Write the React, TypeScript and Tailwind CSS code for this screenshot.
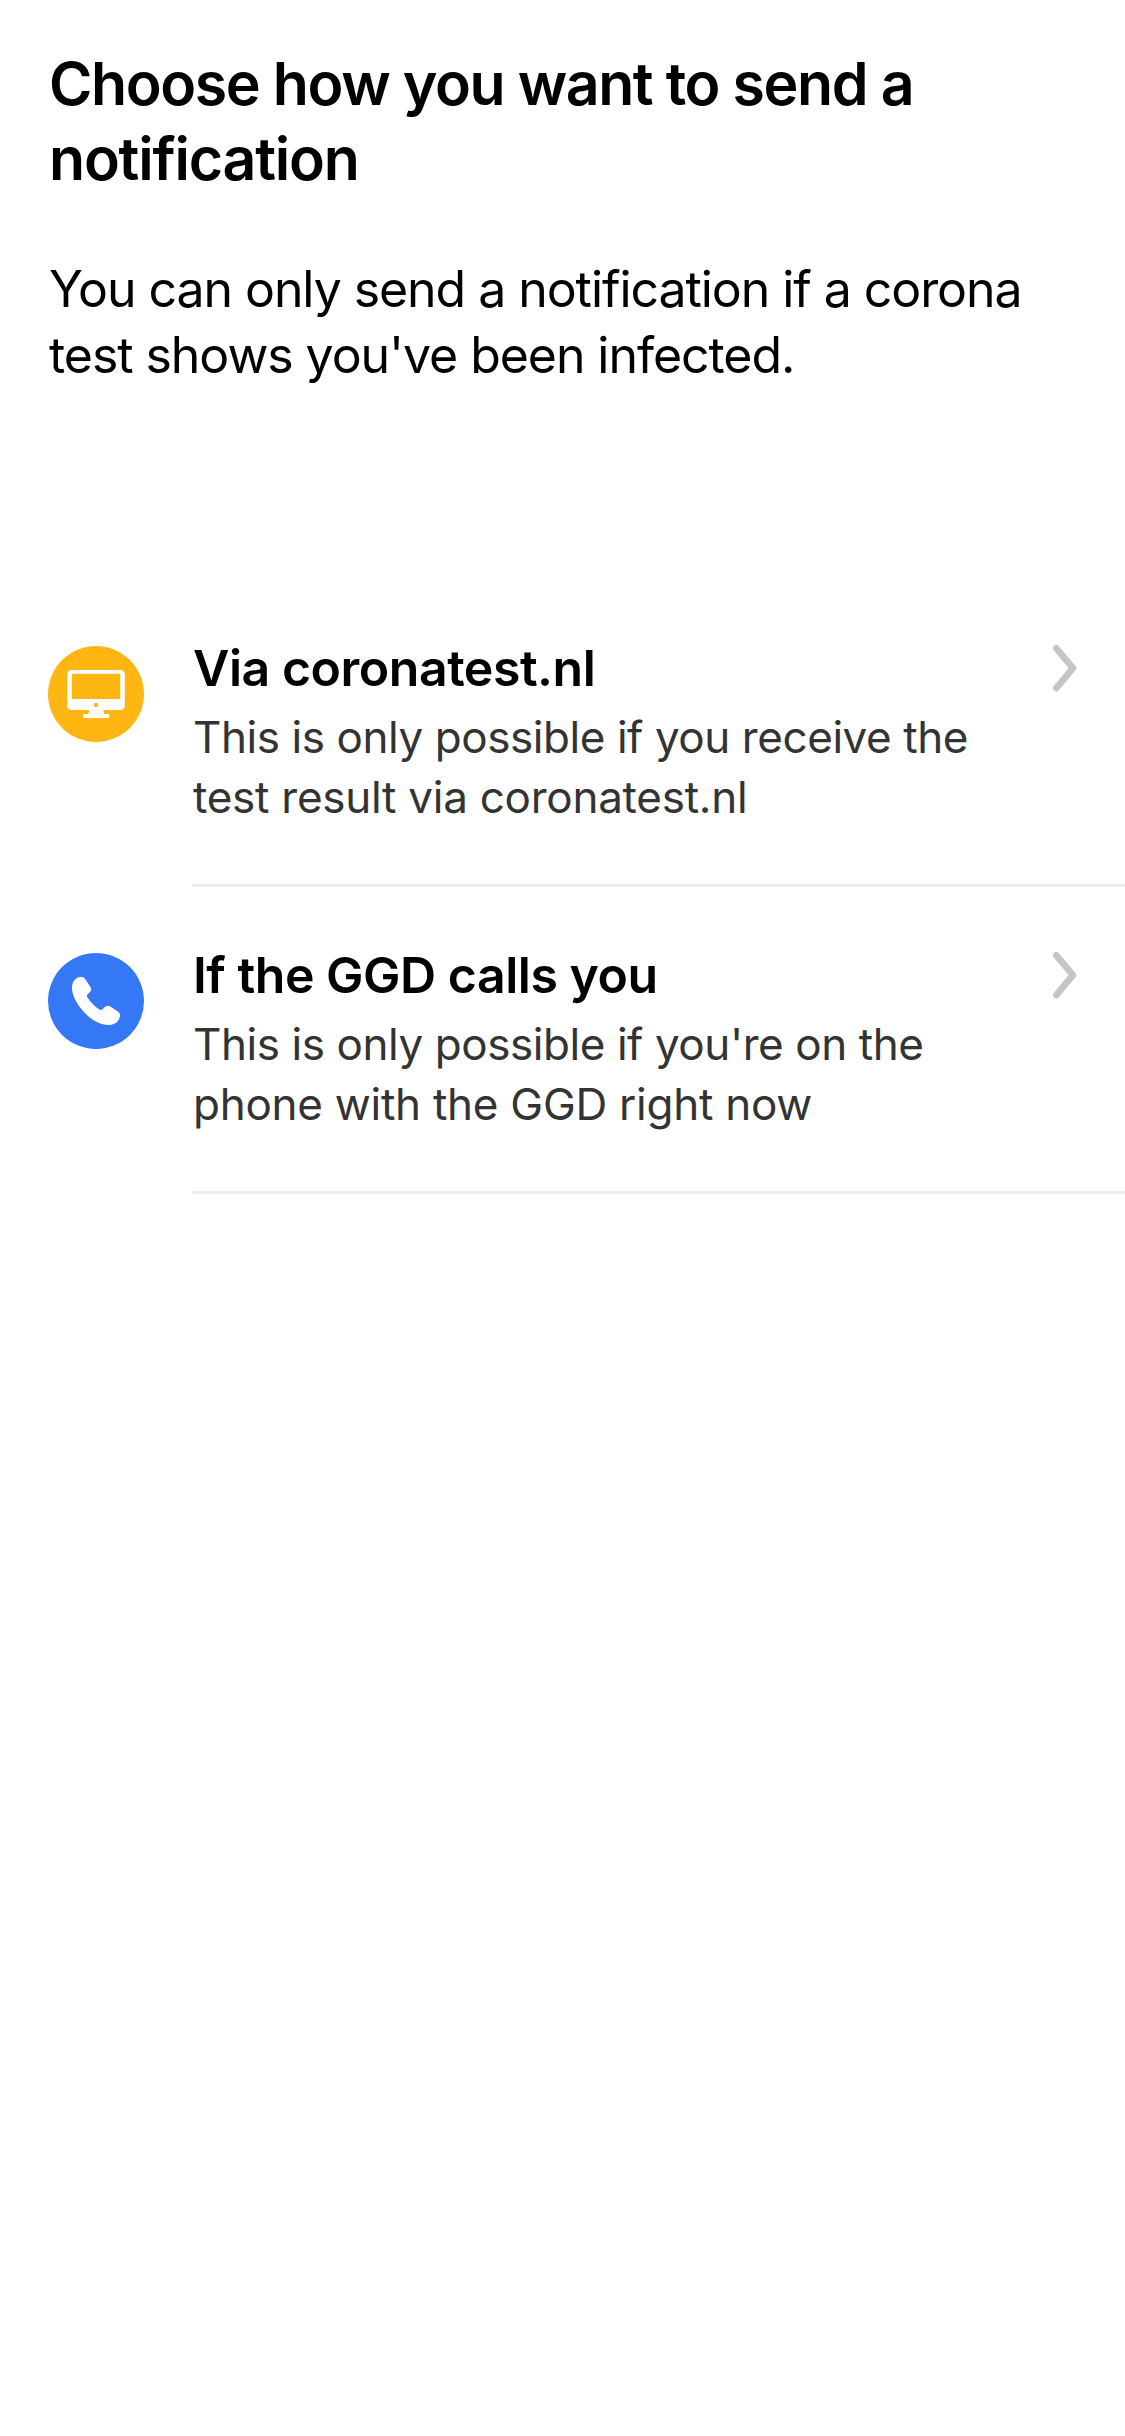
import React from 'react';

function Chevron() {
  return (
    <svg className="mt-[65px] shrink-0" width="24" height="47" viewBox="0 0 24 47" fill="none">
      <path d="M3.3 3.3L20 23.2L3.3 43" stroke="#c5c5c7" strokeWidth="6.6" strokeLinecap="round" strokeLinejoin="round" />
    </svg>
  );
}

function MonitorIcon() {
  return (
    <svg width="96" height="96" viewBox="0 0 96 96">
      <circle cx="48" cy="48" r="48" fill="#ffb612" />
      <path
        fillRule="evenodd"
        fill="#fff"
        d="M23.5 24h49a4.3 4.3 0 0 1 4.3 4.3v31.4a4.3 4.3 0 0 1-4.3 4.3h-49a4.3 4.3 0 0 1-4.3-4.3V28.3a4.3 4.3 0 0 1 4.3-4.3zM25 27.7a1.2 1.2 0 0 0-1.2 1.2V53h48.5V28.900a1.2 1.2 0 0 0-1.2-1.2z"
      />
      <path fill="#fff" d="M41.3 63h14c0 2.500.3 4 1.200 5H59.500a2 2 0 0 1 0 4h-22.500a2 2 0 0 1 0-4h3c.9-1 1.300-2.500 1.300-5z" />
      <circle cx="48" cy="59" r="2.2" fill="#ffb612" />
    </svg>
  );
}

function PhoneIcon() {
  return (
    <svg width="96" height="96" viewBox="0 0 96 96">
      <circle cx="48" cy="48" r="48" fill="#3478f6" />
      <path
        fill="#fff"
        d="M32 24C34.5 23.7 36 24.3 37.2 26L42.6 34.2C43.6 35.8 43.5 37.5 42 39L39.5 41.4C38.8 42.2 38.7 43.2 39.3 44.2C42.5 49.3 46.5 53.3 51.5 56.5C52.6 57.2 53.5 57 54.4 56.2L57 53.9C58.7 52.5 60.6 52.4 62.3 53.5L70.2 58.7C71.7 59.7 72.2 61.2 71.9 63.3C71.2 68.5 67 72 61 72C54 72 47 69.3 40 63C33.5 57 28.3 50.3 25.8 43.5C24.4 39.8 23.9 36.8 24 33.8C24.3 28.6 27.5 24.5 32 24Z"
      />
    </svg>
  );
}

type ItemProps = { icon: React.ReactNode; title: string; lines: [string, string] };

function Item({ icon, title, lines }: ItemProps) {
  return (
    <button className="flex h-[307px] w-full items-start pl-12 text-left">
      <span className="mt-[66px] mr-12 shrink-0">{icon}</span>
      <span className="flex h-full grow items-start justify-between border-b-[3px] border-[#ededed] pr-12">
        <span className="block pt-[57px] pl-px whitespace-nowrap">
          <span className="mb-2 block text-[50px] leading-[62px] font-semibold tracking-[-0.47px] text-black">{title}</span>
          <span className="block text-[44px] leading-[60px] text-[#333]">
            <span className="block tracking-[-0.43px]">{lines[0]}</span>
            <span className="block tracking-[-0.26px]">{lines[1]}</span>
          </span>
        </span>
        <Chevron />
      </span>
    </button>
  );
}

export default function App() {
  return (
    <main className="h-[2436px] w-[1125px] overflow-hidden bg-white font-['Inter',sans-serif] text-black">
      <header className="px-[49px] pt-[46px] whitespace-nowrap">
        <h1 className="text-[59px] leading-[75px] font-semibold">
          <span className="block tracking-[-1.4px]">Choose how you want to send a</span>
          <span className="block tracking-[-1.2px]">notification</span>
        </h1>
        <p className="mt-[60px] text-[50px] leading-[66px] tracking-[-1.06px]">
          You can only send a notification if a corona
          <br />
          test shows you've been infected.
        </p>
      </header>
      <section className="mt-[192px]">
        <Item
          icon={<MonitorIcon />}
          title="Via coronatest.nl"
          lines={['This is only possible if you receive the', 'test result via coronatest.nl']}
        />
        <Item
          icon={<PhoneIcon />}
          title="If the GGD calls you"
          lines={["This is only possible if you're on the", 'phone with the GGD right now']}
        />
      </section>
    </main>
  );
}
